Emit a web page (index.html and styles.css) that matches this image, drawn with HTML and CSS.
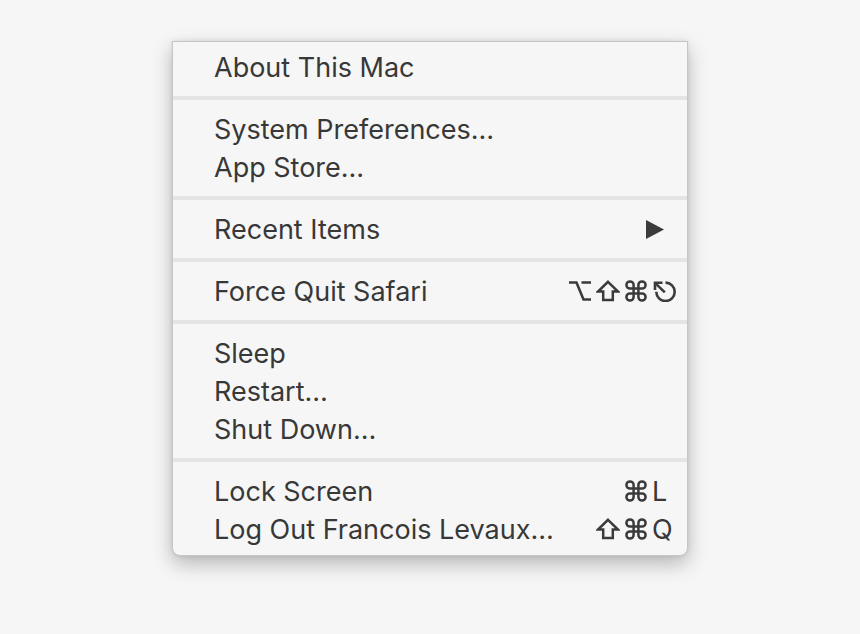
FILE: index.html
```html
<!DOCTYPE html>
<html>
<head>
<meta charset="utf-8">
<link rel="stylesheet" href="styles.css">
</head>
<body>
<div class="menu">
  <div class="item"><span class="label">About This Mac</span></div>
  <div class="sep"></div>
  <div class="item"><span class="label">System Preferences…</span></div>
  <div class="item"><span class="label">App Store…</span></div>
  <div class="sep"></div>
  <div class="item"><span class="label">Recent Items</span>
    <svg class="arrow" width="18" height="19" viewBox="0 0 18 19"><path d="M0 0 L18 9.5 L0 19 Z" fill="#3b3b3b"/></svg>
  </div>
  <div class="sep"></div>
  <div class="item"><span class="label">Force Quit Safari</span>
    <span class="keys">
      <span class="mods">
        <svg class="mod" width="24" height="22" viewBox="0 0 24 22"><path d="M1 2.5 H8.5 L15.5 19.5 H23 M13.5 2.5 H23" fill="none" stroke="#3b3b3b" stroke-width="2.6"/></svg>
        <svg class="mod" width="24" height="22" viewBox="0 0 24 22"><path d="M12 1.8 L22 11.5 H16.8 V20 H7.2 V11.5 H2 Z" fill="none" stroke="#3b3b3b" stroke-width="2.5" stroke-linejoin="miter"/></svg>
        <svg class="mod" width="24" height="22" viewBox="0 1 24 22"><path d="M9.6 9.6 V6 A3.6 3.6 0 1 0 6 9.6 H18 A3.6 3.6 0 1 0 14.4 6 V18 A3.6 3.6 0 1 0 18 14.4 H6 A3.6 3.6 0 1 0 9.6 18 Z" fill="none" stroke="#3b3b3b" stroke-width="2.5"/></svg>
      </span>
      <span class="key"><svg width="25" height="22" viewBox="0 0 25 22"><path d="M13.5 2.6 A9.2 9.2 0 1 1 4.3 11.8" fill="none" stroke="#3b3b3b" stroke-width="2.6"/><path d="M3 10 V2.8 H10.5" fill="none" stroke="#3b3b3b" stroke-width="2.6"/><path d="M3.8 3.6 L12.8 12.4" fill="none" stroke="#3b3b3b" stroke-width="2.6"/></svg></span>
    </span>
  </div>
  <div class="sep"></div>
  <div class="item"><span class="label">Sleep</span></div>
  <div class="item"><span class="label">Restart…</span></div>
  <div class="item"><span class="label">Shut Down…</span></div>
  <div class="sep"></div>
  <div class="item"><span class="label">Lock Screen</span>
    <span class="keys">
      <span class="mods">
        <svg class="mod" width="24" height="22" viewBox="0 1 24 22"><path d="M9.6 9.6 V6 A3.6 3.6 0 1 0 6 9.6 H18 A3.6 3.6 0 1 0 14.4 6 V18 A3.6 3.6 0 1 0 18 14.4 H6 A3.6 3.6 0 1 0 9.6 18 Z" fill="none" stroke="#3b3b3b" stroke-width="2.5"/></svg>
      </span>
      <span class="key">L</span>
    </span>
  </div>
  <div class="item"><span class="label">Log Out Francois Levaux…</span>
    <span class="keys">
      <span class="mods">
        <svg class="mod" width="24" height="22" viewBox="0 0 24 22"><path d="M12 1.8 L22 11.5 H16.8 V20 H7.2 V11.5 H2 Z" fill="none" stroke="#3b3b3b" stroke-width="2.5" stroke-linejoin="miter"/></svg>
        <svg class="mod" width="24" height="22" viewBox="0 1 24 22"><path d="M9.6 9.6 V6 A3.6 3.6 0 1 0 6 9.6 H18 A3.6 3.6 0 1 0 14.4 6 V18 A3.6 3.6 0 1 0 18 14.4 H6 A3.6 3.6 0 1 0 9.6 18 Z" fill="none" stroke="#3b3b3b" stroke-width="2.5"/></svg>
      </span>
      <span class="key">Q</span>
    </span>
  </div>
</div>
</body>
</html>
```
FILE: styles.css
```css
html, body {
  margin: 0;
  padding: 0;
  background: #f6f6f6;
}
body {
  box-sizing: border-box;
  min-height: 634px;
  padding: 41px 0 0 172px;
  font-family: Inter, "Liberation Sans", sans-serif;
  color: #383838;
}
.menu {
  width: 516px;
  box-sizing: border-box;
  background: #f6f6f6;
  border: 1px solid #c6c6c6;
  border-radius: 0 0 8px 8px;
  box-shadow: 0 8px 20px rgba(0,0,0,0.26), 0 0 4px rgba(0,0,0,0.1);
  padding: 6px 0 7px;
}
.item {
  height: 38px;
  display: flex;
  align-items: center;
  justify-content: space-between;
  padding: 0 9px 0 41px;
  font-size: 27px;
}
.label {
  white-space: nowrap;
}
.arrow {
  margin-right: 14px;
}
.keys {
  display: flex;
  align-items: center;
}
.mods {
  display: flex;
  align-items: center;
  gap: 4px;
}
.mod {
  display: block;
}
.key {
  width: 26px;
  margin-left: 4px;
  display: flex;
  align-items: center;
  line-height: 1;
}
.key svg {
  display: block;
}
.sep {
  height: 4px;
  margin: 10px 0;
  background: #e4e4e4;
}
```
